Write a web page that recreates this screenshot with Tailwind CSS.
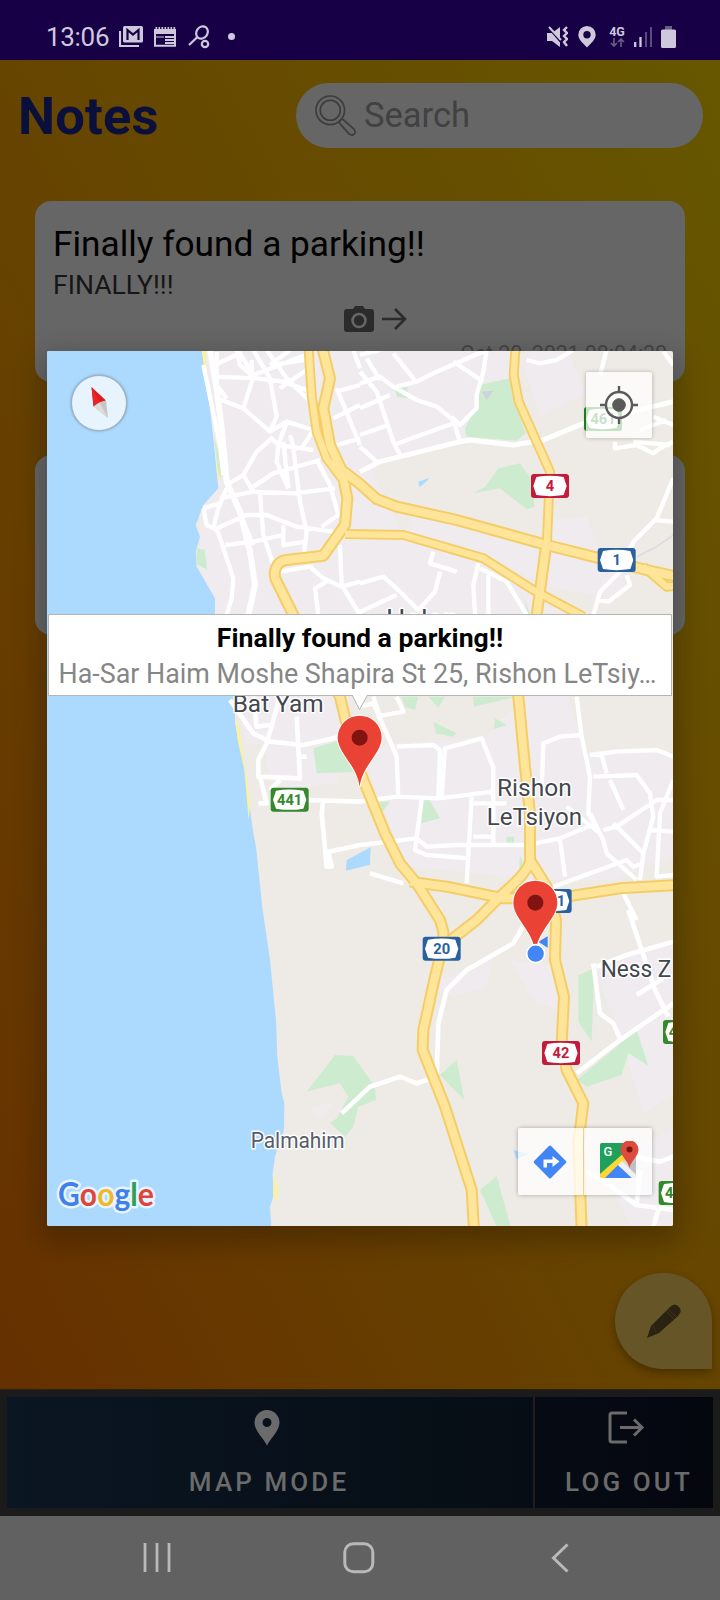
<!DOCTYPE html>
<html lang="en">
<head>
<meta charset="utf-8">
<title>Notes</title>
<script src="https://cdn.jsdelivr.net/npm/@tailwindcss/browser@4"></script>
</head>
<body class="w-[720px] h-[1600px] overflow-hidden bg-black font-['Roboto',sans-serif]">
<div class="relative flex flex-col w-[720px] h-[1600px]">

  <!-- Status bar -->
  <div class="h-[60px] bg-[#170046] flex items-center justify-between pl-[46px] pr-[44px] pt-[13px] text-[#cfc8dc] shrink-0">
    <div class="flex items-center">
      <span class="text-[26px] leading-none w-[64px] tracking-[-0.3px]">13:06</span>
      <svg class="ml-[9px]" width="24" height="22" viewBox="0 0 24 22"><path d="M1 5v15h19" fill="none" stroke="#cfc8dc" stroke-width="2.2"/><rect x="4" y="0" width="20" height="16.500" rx="1.500" fill="#cfc8dc"/><path d="M8.500 14V4l5.500 4.500L19.500 4v10" fill="none" stroke="#170046" stroke-width="2.200"/></svg>
      <svg class="ml-[11px]" width="22" height="20" viewBox="0 0 22 20"><path d="M1 4v14.700h20V4z" fill="none" stroke="#cfc8dc" stroke-width="2"/><path d="M0 2h22v5H0z" fill="#cfc8dc"/><path d="M1.500 1.500h20" stroke="#cfc8dc" stroke-width="3" stroke-dasharray="1.600 1.400"/><path d="M11 10h9M11 13h9M11 16h9" stroke="#cfc8dc" stroke-width="1.800"/><path d="M2 10h8" stroke="#cfc8dc" stroke-width="1"/></svg>
      <svg class="ml-[12px]" width="22" height="24" viewBox="0 0 22 24" fill="none" stroke="#cfc8dc" stroke-width="2.200"><ellipse cx="14" cy="7.500" rx="5.500" ry="6.500" transform="rotate(35 14 7.500)"/><path d="M9.500 12L1 20"/><circle cx="17" cy="19" r="3.200"/></svg>
      <span class="ml-[18px] w-[7px] h-[7px] rounded-full bg-[#cfc8dc]"></span>
    </div>
    <div class="flex items-center">
      <svg width="21" height="22" viewBox="0 0 21 22"><path d="M0 7h5l8-6v20l-8-6H0z" fill="#cfc8dc"/><path d="M0 0l14 16" stroke="#170046" stroke-width="2"/><path d="M2 1l12 13" stroke="#cfc8dc" stroke-width="2"/><path d="M20 1l-3 3 3 3-3 3 3 3-3 3 3 4" fill="none" stroke="#cfc8dc" stroke-width="2.400"/></svg>
      <svg class="ml-[10px]" width="18" height="22" viewBox="0 0 18 22"><path fill-rule="evenodd" d="M9 0a8.700 8.700 0 0 1 8.700 8.700C17.700 14 11 19 9 21.500 7 19 .3 14 .3 8.700A8.700 8.700 0 0 1 9 0zm0 5a3.700 3.700 0 1 0 0 7.400A3.700 3.700 0 0 0 9 5z" fill="#cfc8dc"/></svg>
      <div class="ml-[12px] w-[18px] flex flex-col items-center -mt-[1px]">
        <span class="text-[12.500px] font-bold leading-[13px]">4G</span>
        <svg width="15" height="9" viewBox="0 0 15 9" fill="none" stroke="#6a5d88" stroke-width="1.600"><path d="M4 0v8M1 5l3 3 3-3M11 9V1M8 4l3-3 3 3"/></svg>
      </div>
      <svg class="ml-[8px]" width="18" height="20" viewBox="0 0 18 20"><path d="M1.200 15v5M6.500 10v10" stroke="#cfc8dc" stroke-width="2.300"/><path d="M12 5v15M17 0v20" stroke="#5a4c7c" stroke-width="2"/></svg>
      <svg class="ml-[9px]" width="15" height="22" viewBox="0 0 15 22"><path d="M4 0h7v4H4z" fill="#6a5d88"/><rect y="3.500" width="15" height="18.500" rx="1.500" fill="#cfc8dc"/></svg>
    </div>
  </div>

  <!-- App content -->
  <div class="relative h-[1329px] shrink-0 bg-linear-to-tr from-[#663000] via-[#664500] to-[#665700] flex flex-col">
    <div class="flex items-center justify-between pt-[23px] pl-[18px] pr-[17px]">
      <h1 class="text-[52.500px] leading-[64px] font-bold text-[#0b0f3c] tracking-[0.2px] pt-px">Notes</h1>
      <div class="flex items-center w-[407px] h-[65px] rounded-full bg-[#666] pl-[19px]">
        <svg width="42" height="42" viewBox="0 0 44 44" fill="none" stroke="#3c3c3c" stroke-width="1.700"><circle cx="16" cy="16" r="15"/><circle cx="16" cy="16" r="10.500"/><path d="M25 28l3-3 3 2 10 9q2 3 0 5t-5 0l-9-10z" stroke-linejoin="round"/></svg>
        <span class="ml-[7px] pb-px text-[34.500px] leading-none text-[#414141]">Search</span>
      </div>
    </div>
    <div class="mt-[53px] mx-[35px] h-[181px] rounded-2xl bg-[#666] px-[18px] pt-[22px] flex flex-col">
      <div class="text-[35.250px] leading-[42px] text-black">Finally found a parking!!</div>
      <div class="text-[26.600px] leading-[38px] mt-[1px] text-[#161616]">FINALLY!!!</div>
      <div class="flex items-center justify-center gap-[8px] h-[28px] mt-px pl-[31px]">
        <svg width="30" height="28" viewBox="0 0 30 28"><path d="M3 4h6l2-3h8l2 3h6q3 0 3 3v17q0 3-3 3H3q-3 0-3-3V7q0-3 3-3z" fill="#2b2b2b"/><circle cx="15" cy="15.500" r="6.500" fill="#2b2b2b" stroke="#666" stroke-width="2.600"/></svg>
        <svg width="25" height="24" viewBox="0 0 25 24" fill="none" stroke="#2b2b2b" stroke-width="2.600"><path d="M0 12h23M13 2l10 10-10 10"/></svg>
      </div>
      <div class="text-right text-[21.300px] leading-[24px] mt-[9px] text-[#454545]">Oct 20, 2021 08:04:20</div>
    </div>
    <div class="mt-[73px] mx-[35px] h-[180px] rounded-2xl bg-[#666]"></div>
    <div class="mt-auto mb-[20px] mr-[8px] self-end w-[97px] h-[96px] rounded-t-full rounded-bl-full bg-[#665527] shadow-[0_4px_10px_rgba(0,0,0,0.3)] flex items-center justify-center">
      <svg width="36" height="36" viewBox="0 0 36 36"><path d="M1 35L5 23 24 4q5-5 9 0 4 4-1 9L13 30z" fill="#2a2312"/><path d="M20 8l8 8M22 6l8 8M7 23l3 6" stroke="#4a3e1d" stroke-width=".6" fill="none"/></svg>
    </div>
  </div>

  <!-- Bottom bar -->
  <div class="h-[127px] shrink-0 bg-[#1b1b1b] border-t border-[#2a2118] px-[7px] pt-[7px] pb-[8px] flex">
    <div class="w-[528px] pr-[7px] bg-linear-to-r from-[#0b1623] to-[#060d14] border-r-2 border-[#211e1d] flex flex-col items-center text-[#6b6b6b]">
      <svg class="mt-[13px]" width="26" height="36" viewBox="0 0 26 36"><path fill-rule="evenodd" d="M13 0a12.500 12.500 0 0 1 12.500 12.500C25.500 21 16 29 13 35.500 10 29 .5 21 .5 12.500A12.500 12.500 0 0 1 13 0zm0 8a4.500 4.500 0 1 0 0 9 4.500 4.500 0 0 0 0-9z" fill="#6b6b6b"/></svg>
      <span class="mt-[20px] text-[26px] leading-[32px] font-medium tracking-[3.100px] pl-[5px] whitespace-nowrap">MAP MODE</span>
    </div>
    <div class="flex-1 pl-[5px] bg-linear-to-r from-[#060b13] to-[#05070f] flex flex-col items-center text-[#6b6b6b]">
      <svg class="mt-[14px]" width="37" height="33" viewBox="0 0 37 33" fill="none" stroke="#6b6b6b" stroke-width="3"><path d="M19 2H4q-2 0-2 2v25q0 2 2 2h15M12 16.500h22M26 8.500l8 8-8 8"/></svg>
      <span class="mt-[22px] text-[26px] leading-[32px] font-medium tracking-[3.100px] pl-[5px] whitespace-nowrap">LOG OUT</span>
    </div>
  </div>

  <!-- System navigation -->
  <div class="h-[84px] shrink-0 bg-[#616161] flex items-center justify-between pl-[143px] pr-[151px] pb-[1px]">
    <svg width="28" height="29" viewBox="0 0 28 29" stroke="#b9b9b9" stroke-width="2.800"><path d="M2 0v29M14 0v29M26 0v29"/></svg>
    <svg class="-ml-[5px]" width="32" height="32" viewBox="0 0 32 32"><rect x="1.800" y="1.800" width="28" height="28" rx="8.500" fill="none" stroke="#b9b9b9" stroke-width="3"/></svg>
    <svg width="18" height="30" viewBox="0 0 18 30" fill="none" stroke="#b9b9b9" stroke-width="3"><path d="M16.500 1.500L2.500 15l14 13.500"/></svg>
  </div>

  <!-- Map dialog -->
  <div class="absolute left-[47px] top-[351px] w-[626px] h-[875px] overflow-visible rounded-[2px] shadow-[0_10px_28px_6px_rgba(0,0,0,0.24)]">
    <!-- The map's units are thirds of a pixel; tiles are placed with translate -->
    <svg class="block rounded-[2px]" width="626" height="875" viewBox="141 1053 1878 2625" font-family="Roboto, sans-serif">
      <defs>
        <g id="wide">
          <path d="M965 1035L990 1135 970 1225 990 1335 1025 1410 1080 1452 1130 1497 1190 1520 1370 1560 1640 1635 1800 1675 1940 1710 2030 1730"/>
          <path d="M1025 1410L1042 1495 1035 1575 970 1667 860 1680Q836 1682 828 1704 820 1722 828 1740L880 1845 1020 2090 1060 2260 1090 2340 1155 2500 1200 2590 1250 2650 1320 2760 1330 2795 1330 2830 1305 2930 1270 3090 1268 3150 1335 3320 1415 3570 1422 3690"/>
          <path d="M1640 1625L1610 1845 1555 2090 1575 2300 1590 2440 1590 2580Q1590 2610 1510 2680L1430 2760 1340 2830"/>
          <path d="M1590 2580L1640 2660 1668 2760 1665 2880 1692 2990 1685 3130 1700 3210 1750 3310 1735 3430 1745 3690"/>
          <path d="M1230 2645L1340 2660 1510 2695 1700 2690 1860 2665 2030 2655"/>
        </g>
        <g id="narrow">
          <path d="M1547 1035L1541 1125 1556 1205 1650 1415 1640 1645"/>
          <path d="M925 1035L935 1185 950 1295 980 1375 1025 1435"/>
          <path d="M1035 1602L1080 1603 1210 1605 1450 1675 1600 1770 1750 1850"/>
          <path d="M1930 1700L2000 1760 2030 1757"/>
        </g>
        <g id="shield">
          <rect width="114" height="72" rx="9"/>
          <path d="M16 9Q57 2 98 9L107 36 98 63Q57 70 16 63L7 36z" fill="#fff"/>
        </g>
        <g id="pin">
          <path d="M0 214C-7 150-66 112-66 66A66 66 0 0 1 66 66C66 112 7 150 0 214z" fill="#ea4335" stroke="#fff" stroke-width="6" paint-order="stroke"/>
          <circle cy="66" r="24" fill="#811411"/>
        </g>
      </defs>
      <rect x="141" y="1053" width="1878" height="2625" fill="#eeebe6"/>
      <!-- Built-up areas -->
      <g fill="#efebef">
        <path d="M600 1035H1550L1530 1290 1100 1385 1160 1500 1210 1600 1480 1680 1750 1850 1700 2080H1050L1010 2350 840 2370 800 2300V2230H740L700 2080 600 1720z"/>
        <path d="M1080 2250L1180 2230 1460 2210 1570 2090 1700 2080 1760 2260 1950 2250 2030 2280V2560L1850 2640 1640 2640 1220 2600z"/>
        <path d="M1780 2900L2030 2820V3280L1930 3340 1860 3100zM1530 2880L1700 2900 1670 3030 1600 3000zM1280 2960L1480 2870 1460 2960 1360 2990zM930 3320L1000 3310 960 3360zM1800 3500L2030 3380V3690H1900z"/>
        <path d="M1560 1060L1700 1050 1760 1180 1620 1250zM1650 1560L1760 1550 1800 1660 1880 1720 1860 1800 1640 1760zM1250 1540L1600 1600 1620 1750 1400 1640 1210 1590z"/>
      </g>
      <!-- Sea -->
      <path d="M141 1053H606L625 1185 640 1315 655 1465 610 1515 587 1575 600 1610 587 1655 590 1700 645 1795 645 1845 705 2090 705 2170 735 2310 760 2500 768 2540 788 2730 810 2880 828 3060 832 3170 845 3280 853 3310 852 3390 825 3470 818 3520 820 3590 810 3620 814 3680H141z" fill="#acdaff"/>
      <g fill="#fbf2a0">
        <path d="M606 1053L618 1053 620 1120 632 1215 625 1200zM650 1380l14 25 -4 40-10-30zM705 2150l12 30 34 230 -5 50-13-150-20-90zM823 3520l12 50-5 30-10-5z"/>
      </g>
      <!-- Parks -->
      <g fill="#cdeccf">
        <path d="M1437 1155L1530 1135 1548 1210 1577 1300 1550 1322 1400 1310 1395 1285 1435 1210zM1180 1160l42 0 2 35-32-4zM1420 1480L1455 1460 1495 1405 1560 1390 1590 1430 1605 1520 1580 1528 1500 1465z"/>
        <path d="M640 1305l18 60 6 75-10-30zM590 1645l24 5 8 60-32-18zM940 2245l100-30 40 100-130 5zM1205 2090h50l-10 40-30-10zM1285 2090h50l-20 35zM1420 2090h130l-130 30zM1300 2165l70 35-12 10-50-10zM1485 2155l35 20-38 12zM1285 2395l35 60-55 15-5-60zM1140 2405h30l-30 40zM1560 2565l18 45-22 20zM1520 2510h22v18h-22zM1560 1770l30 70 5 40-20-70z"/>
        <path d="M920 3275L1005 3165 1060 3168 1125 3260 1128 3300 1075 3320 1060 3380 1035 3410 990 3370 1010 3355 1045 3290 1020 3250zM1320 3225L1370 3180 1393 3300zM1735 2925l48-20-8 220-40-60zM1730 3240L1910 3090 1945 3197 1885 3160 1865 3225 1760 3260zM1440 3570L1490 3528 1532 3680H1490z"/>
      </g>
      <path d="M1255 1445l35-12-20 20-12 8zM1040 2580l72-38-2 52-72 18zM1540 3450l45 12-35 16z" fill="#acdaff"/>
      <path d="M1445 1175l35-3-20 28z" fill="#cdd3dc"/>
      <!-- Streets -->
      <g fill="none" stroke="#fff" stroke-width="13" stroke-linejoin="round">
        <g transform="translate(120 1035)">
          <path d="M510 15L530 130 545 250 560 410 600 500 630 620 645 720 625 810" stroke-width="18"/>
          <path d="M490 60L540 300 550 390M530 20V160L610 190 690 260 710 215 690 100 640 15M525 95L650 100 730 110 800 135M525 60L600 25 640 90 720 60 810 25M590 15L600 60 640 95 610 190M635 45V100M700 60L820 40M680 15L740 100 800 160 810 120M720 130l80-55M750 15L690 60M530 120L560 160M690 260L740 230 820 255M690 275L715 300 820 315M740 230L715 300 710 350 745 430M820 255L785 310M730 290L740 380 745 430M760 310L780 470 800 560 790 640M750 270L765 320M690 285L650 320 610 390 560 420M610 390L640 440M540 460L640 440 760 445 885 430M640 425L700 385 840 345M490 490L540 475 560 430M490 490L500 540 520 550 535 490 560 430M520 555L620 510 680 510 770 545 880 560M555 600L640 590 730 570M660 445L670 570 700 660M730 540V600L800 590M530 550L580 700 575 760 560 810M580 460L640 600M830 345L870 420 895 510 845 545M900 600L905 720 960 810M720 680L810 665 850 700 905 725 960 710M835 810L825 730 860 710M890 130L960 300M890 300L960 280M890 140L960 120M940 15L960 70M880 220L960 180"/>
        </g>
        <g transform="translate(1080 1035)">
          <path d="M0 380L60 350 300 290 330 285 460 300 550 285 670 235 940 170" stroke-width="15"/>
          <path d="M0 80L50 140 100 290 120 330M0 115L60 95 100 125 170 165 230 185 280 225 300 290M100 25L160 100 170 115M0 30L60 15M20 40L60 105M0 190L90 150M0 270L85 240M100 300L280 235M0 305L50 350M110 125L170 110 230 80 380 15M380 15L370 80 350 150 350 190 300 240 275 215M280 50L370 110M500 45L540 55 590 45 640 15M740 15L720 90M765 290V310L830 300 880 325 900 310 940 290M880 215L940 240M840 255L920 225M820 290L930 300M910 20L940 60M940 400L890 520 820 590 790 650M880 525L940 530M800 660L720 740 700 810M800 690L810 720 745 770 715 765M220 620L210 655 290 680M240 680L225 740 170 800M355 655L340 720 345 810M385 690L385 810M360 670L440 710 500 810M0 715L70 695 120 740 180 800M0 800L110 750"/>
          <path d="M830 635L890 605 940 570" stroke="#dedbe2" stroke-width="5"/>
        </g>
        <g transform="translate(120 1800)">
          <path d="M570 300L640 400 690 425 790 435 900 410M640 290L650 380 690 375M720 290L680 430 655 480V530L780 535 770 350M770 470H800M660 530L680 610H655M720 540L690 570M800 600L960 605M850 600L845 640 860 800H875L865 755 960 735" stroke-width="14"/>
        </g>
        <g transform="translate(1080 1800)">
          <path d="M0 320L40 310 80 400 110 470 115 590M50 350L130 335 110 290M40 290L60 350M110 440L220 435 240 450 235 590M245 590L255 445 365 415 390 480 400 500V730M0 605L110 590 235 595 400 575M185 600L165 750 200 765 330 775M0 735L170 715 200 740 290 735 500 735 600 715 710 670M335 590L320 850M340 610H440M340 710H400M30 820L130 850M650 290L665 410 690 530 685 640 730 720 740 760 830 840M545 570L550 430 600 410 665 405M690 465L770 455 890 450 940 470M725 465L740 520M700 530L830 525 870 580 880 650 850 760 840 840M730 690L770 680 890 600 940 600M690 640L730 720M750 540L790 630M760 670L850 760M870 690L940 695M940 540L900 640 890 830 940 825M600 720L615 830M580 860L800 780 820 800 850 790M620 620L720 700M790 880L830 960"/>
        </g>
        <g transform="translate(1080 2730)">
          <path d="M805 0L885 240 925 320M940 95L800 135 710 170M700 160L720 310 760 340 780 385M650 490L780 390 940 280M830 255L910 205M-55 610L30 530 120 500 170 520 230 500M230 500L235 340 260 240 320 180 460 100 500 30M670 780L740 820 830 885 940 900M830 885L840 780M820 740L900 755 940 740M880 950L895 900" stroke-width="14"/>
        </g>
      </g>
      <!-- Highways: casing, then fill -->
      <g fill="none" stroke-linejoin="round">
        <g stroke="#f5cd66"><use href="#narrow" stroke-width="30"/><use href="#wide" stroke-width="36"/></g>
        <g stroke="#ffe59a"><use href="#narrow" stroke-width="19"/><use href="#wide" stroke-width="24"/></g>
      </g>
      <!-- Road shields -->
      <g font-size="44" font-weight="700" text-anchor="middle">
        <g transform="translate(1593 1422)" fill="#c41a3c"><use href="#shield"/><text x="57" y="52">4</text></g>
        <g transform="translate(1793 1644)" fill="#28619f"><use href="#shield"/><text x="57" y="52">1</text></g>
        <g transform="translate(1752 1221)" fill="#22871f"><use href="#shield"/><text x="57" y="52">461</text></g>
        <g transform="translate(812 2363)" fill="#34882d"><use href="#shield"/><text x="57" y="52">441</text></g>
        <g transform="translate(1268 2810)" fill="#28619f"><use href="#shield"/><text x="57" y="52">20</text></g>
        <g transform="translate(1601 2667)" fill="#28619f"><use href="#shield"/><text x="82" y="52">1</text></g>
        <g transform="translate(1626 3123)" fill="#c41a3c"><use href="#shield"/><text x="57" y="52">42</text></g>
        <g transform="translate(1989 3060)" fill="#34882d"><use href="#shield"/><text x="30" y="52">4</text></g>
        <g transform="translate(1976 3543)" fill="#34882d"><use href="#shield"/><text x="32" y="52">4</text></g>
      </g>
      <!-- Place names -->
      <g font-size="73" fill="#43474d" stroke="#fff" stroke-width="9" stroke-linejoin="round" paint-order="stroke">
        <text x="1158" y="1884" font-size="78" textLength="216" lengthAdjust="spacingAndGlyphs">Holon</text>
        <text x="698" y="2137" textLength="273" lengthAdjust="spacingAndGlyphs">Bat Yam</text>
        <text x="1491" y="2387" textLength="224" lengthAdjust="spacingAndGlyphs">Rishon</text>
        <text x="1460" y="2474" textLength="286" lengthAdjust="spacingAndGlyphs">LeTsiyon</text>
        <text x="1802" y="2930" textLength="212" lengthAdjust="spacingAndGlyphs">Ness Z</text>
        <text x="752" y="3444" font-size="68" textLength="282" lengthAdjust="spacingAndGlyphs" fill="#565d69">Palmahim</text>
      </g>
      <!-- Current position and markers -->
      <path d="M1615 2825l28-16v34z" fill="#4285f4"/>
      <use href="#pin" x="1079" y="2147"/>
      <use href="#pin" x="1606" y="2642"/>
      <circle cx="1607" cy="2861" r="27" fill="#4285f4" stroke="#fff" stroke-width="5"/>
    </svg>

    <!-- Compass -->
    <div class="absolute left-[24px] top-[24px] w-[56px] h-[56px] rounded-full bg-[#e7f3fd] border border-[#a5b0ba] shadow-[0_0_3px_rgba(0,0,0,0.35)]">
      <svg width="54" height="54" viewBox="0 0 54 54"><path d="M19.500 11L34 24.500 27.500 26.500 21.500 30.500z" fill="#d9201f"/><path d="M34 24.500L36 42 21.500 30.500 27.500 26.500z" fill="#c9c5c2"/><path d="M19.500 11L27.500 26.500 21.500 30.500z" fill="#e8262a"/><path d="M27.500 26.500L36 42 21.500 30.500z" fill="#dedad8"/></svg>
    </div>
    <!-- My location -->
    <div class="absolute left-[539px] top-[21px] w-[66px] h-[66px] rounded-[2px] bg-white/75 shadow-[0_0_4px_rgba(0,0,0,0.25)] flex items-center justify-center">
      <svg width="38" height="38" viewBox="0 0 38 38" stroke="#5a5a5a" stroke-width="2.400"><circle cx="19" cy="19" r="13" fill="none"/><circle cx="19" cy="19" r="6.300" fill="#5a5a5a" stroke-width="1"/><path d="M0 19h6M32 19h6M19 0v6M19 32v6"/></svg>
    </div>
    <!-- Info window -->
    <div class="absolute left-px top-[263px] w-[624px] h-[82px] bg-white border border-[#b5b5b5] flex flex-col items-center whitespace-nowrap">
      <span class="mt-[6px] text-[26.600px] leading-[34px] font-bold text-black">Finally found a parking!!</span>
      <span class="mt-px mr-[5px] text-[26.850px] leading-[36px] text-[#868686]">Ha-Sar Haim Moshe Shapira St 25, Rishon LeTsiy…</span>
      <svg class="absolute left-[302px] top-[79px]" width="18" height="17" viewBox="0 0 18 17"><path d="M1 0L8.500 15.500 17 0z" fill="#fff"/><path d="M1 1L8.500 15.500 16.500 1" fill="none" stroke="#b5b5b5"/></svg>
    </div>
    <!-- Map toolbar -->
    <div class="absolute left-[471px] top-[777px] w-[134px] h-[67px] rounded-[2px] bg-white/75 shadow-[0_0_4px_rgba(0,0,0,0.3)] flex">
      <div class="flex-1 flex items-center justify-center border-r border-black/15">
        <svg width="34" height="34" viewBox="0 0 34 34"><rect x="5" y="5" width="24" height="24" rx="1.500" transform="rotate(45 17 17)" fill="#4285f4"/><path d="M10.500 22.500V14.500h9V11l7 5.500-7 5.500v-4h-5.500v4.500z" fill="#fff"/></svg>
      </div>
      <div class="flex-1 flex items-center justify-center pl-[4px] pb-[3px]">
        <svg width="39" height="38" viewBox="0 0 39 38"><rect x="0" y="2" width="36" height="35" rx="2" fill="#d9d9dc"/><path d="M2 2h22l4 9L0 36V4q0-2 2-2z" fill="#1fa15d"/><path d="M0 33L25 11l5 4L6 37H2q-2 0-2-2z" fill="#fdd835"/><path d="M5 37L18 24 32 37z" fill="#4285f4"/><path d="M18 24l4-4 14 14v3h-4z" fill="#eef0f3"/><path d="M29 27L36 14V33z" fill="#bfbfc4"/><path d="M29.500 27C28 20 20.500 15 20.500 8.500a9 9 0 0 1 18 0C38.500 15 31 20 29.500 27z" fill="#dd4b3e"/><circle cx="29.500" cy="8.500" r="3" fill="#7a1712"/><text x="3.500" y="14.500" font-family="Roboto, sans-serif" font-weight="500" font-size="13" fill="#fff">G</text></svg>
      </div>
    </div>
    <!-- Google wordmark -->
    <svg class="absolute left-[8px] top-[820px]" width="104" height="48" viewBox="0 0 104 48" font-family="Lato, sans-serif" font-size="32" font-weight="700" stroke="#e8f4ff" stroke-width="5" stroke-linejoin="round" paint-order="stroke">
      <text y="35" textLength="96" x="3" lengthAdjust="spacingAndGlyphs"><tspan fill="#4080ea">G</tspan><tspan fill="#dd4639">o</tspan><tspan fill="#f0b929">o</tspan><tspan fill="#4080ea">g</tspan><tspan fill="#2f9e58">l</tspan><tspan fill="#dd4639">e</tspan></text>
    </svg>
  </div>
</div>
</body>
</html>
